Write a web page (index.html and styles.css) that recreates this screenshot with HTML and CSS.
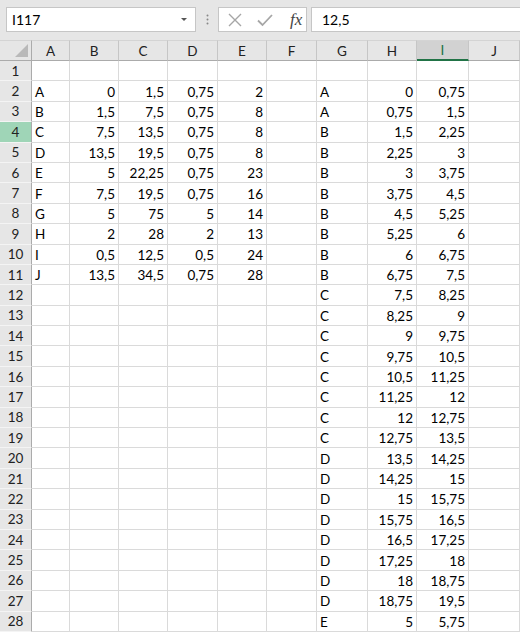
FILE: index.html
```html
<!DOCTYPE html>
<html lang="en">

<head>
    <meta charset="UTF-8">
    <meta name="viewport" content="width=device-width, initial-scale=1.0">
    <title>Sheet</title>

    <link rel="stylesheet" href="styles.css">
</head>

<body>

    <div class="toolbar">
        <div class="name-box">
            <span>I117</span>
            <span class="arrow"></span>
        </div>
        <div class="grip">
            <svg width="3" height="11" viewBox="0 0 3 11"><circle cx="1.5" cy="1.5" r="1" fill="#888"/><circle cx="1.5" cy="5.5" r="1" fill="#888"/><circle cx="1.5" cy="9.5" r="1" fill="#888"/></svg>
        </div>
        <div class="fx-buttons">
            <svg width="14" height="14" viewBox="0 0 14 14"><path d="M1 1 L13 13 M13 1 L1 13" stroke="#a6a6a6" stroke-width="1.4" fill="none"/></svg>
            <svg width="16" height="14" viewBox="0 0 16 14"><path d="M1 7.5 L5.5 12 L15 2" stroke="#a6a6a6" stroke-width="1.8" fill="none"/></svg>
            <span class="fx">fx</span>
        </div>
        <div class="formula">12,5</div>
    </div>

    <div class="sheet" id="sheet"></div>

    <script>
        const cols = ['A', 'B', 'C', 'D', 'E', 'F', 'G', 'H', 'I', 'J'];

        // A..E then G..I, one row per line, starting at row 2
        const data = [
            ['A', '0', '1,5', '0,75', '2', 'A', '0', '0,75'],
            ['B', '1,5', '7,5', '0,75', '8', 'A', '0,75', '1,5'],
            ['C', '7,5', '13,5', '0,75', '8', 'B', '1,5', '2,25'],
            ['D', '13,5', '19,5', '0,75', '8', 'B', '2,25', '3'],
            ['E', '5', '22,25', '0,75', '23', 'B', '3', '3,75'],
            ['F', '7,5', '19,5', '0,75', '16', 'B', '3,75', '4,5'],
            ['G', '5', '75', '5', '14', 'B', '4,5', '5,25'],
            ['H', '2', '28', '2', '13', 'B', '5,25', '6'],
            ['I', '0,5', '12,5', '0,5', '24', 'B', '6', '6,75'],
            ['J', '13,5', '34,5', '0,75', '28', 'B', '6,75', '7,5'],
            ['', '', '', '', '', 'C', '7,5', '8,25'],
            ['', '', '', '', '', 'C', '8,25', '9'],
            ['', '', '', '', '', 'C', '9', '9,75'],
            ['', '', '', '', '', 'C', '9,75', '10,5'],
            ['', '', '', '', '', 'C', '10,5', '11,25'],
            ['', '', '', '', '', 'C', '11,25', '12'],
            ['', '', '', '', '', 'C', '12', '12,75'],
            ['', '', '', '', '', 'C', '12,75', '13,5'],
            ['', '', '', '', '', 'D', '13,5', '14,25'],
            ['', '', '', '', '', 'D', '14,25', '15'],
            ['', '', '', '', '', 'D', '15', '15,75'],
            ['', '', '', '', '', 'D', '15,75', '16,5'],
            ['', '', '', '', '', 'D', '16,5', '17,25'],
            ['', '', '', '', '', 'D', '17,25', '18'],
            ['', '', '', '', '', 'D', '18', '18,75'],
            ['', '', '', '', '', 'D', '18,75', '19,5'],
            ['', '', '', '', '', 'E', '5', '5,75'],
        ];

        const sheet = document.getElementById('sheet');
        let html = '<div class="corner"></div>';

        cols.forEach(c => {
            html += `<div class="col-head${c === 'I' ? ' active' : ''}">${c}</div>`;
        });

        for (let r = 1; r <= 28; r++) {
            html += `<div class="row-head${r === 4 ? ' active' : ''}">${r}</div>`;
            const row = data[r - 2] || [];
            // spread into A..J, leaving F and J empty
            const vals = [row[0], row[1], row[2], row[3], row[4], '', row[5], row[6], row[7], ''];
            vals.forEach((v, i) => {
                const isText = i === 0 || i === 6;
                html += `<div class="cell ${isText ? 'txt' : 'num'}">${v || ''}</div>`;
            });
        }

        sheet.innerHTML = html;
    </script>

</body>

</html>
```

FILE: styles.css
```css
body {
    margin: 0;
    padding: 0;
    width: 520px;
    height: 632px;
    overflow: hidden;
    background-color: #fff;
    font-family: Lato, "Liberation Sans", sans-serif;
    font-size: 13.5px;
    color: #000;
}

.toolbar {
    display: flex;
    align-items: flex-start;
    height: 40px;
    padding: 7px 0 0 6px;
    box-sizing: border-box;
    background-color: #e6e6e6;
    overflow: hidden;
}

.name-box {
    display: flex;
    align-items: center;
    justify-content: space-between;
    width: 190px;
    height: 25px;
    padding: 0 8px 0 5px;
    box-sizing: border-box;
    background-color: #fff;
    border: 1px solid #c6c6c6;
    font-size: 14px;
}

.arrow {
    width: 0;
    height: 0;
    border-left: 3px solid transparent;
    border-right: 3px solid transparent;
    border-top: 3px solid #555;
}

.grip {
    display: flex;
    align-items: center;
    justify-content: center;
    width: 22px;
    height: 25px;
}

.fx-buttons {
    display: flex;
    align-items: center;
    width: 89px;
    height: 25px;
    padding: 0 0 0 9px;
    box-sizing: border-box;
    background-color: #fff;
    border: 1px solid #c6c6c6;
    gap: 15px;
}

.fx {
    font-family: "Liberation Serif", serif;
    font-style: italic;
    font-size: 17px;
    color: #444;
    margin-left: 2px;
}

.formula {
    flex: 1;
    height: 25px;
    margin-left: 4px;
    padding-left: 10px;
    line-height: 23px;
    box-sizing: border-box;
    background-color: #fff;
    border: 1px solid #c6c6c6;
    border-right: none;
    font-size: 14px;
}

.sheet {
    display: grid;
    grid-template-columns: 32px 38px 49px 49px 50px 49px 50px 51px 49px 52px 51px;
    grid-template-rows: 21px repeat(28, 20.4px);
}

.corner {
    position: relative;
    background-color: #e6e6e6;
    border-right: 1px solid #ababab;
    border-bottom: 1px solid #ababab;
    border-top: 1px solid #d4d4d4;
}

.corner::after {
    content: "";
    position: absolute;
    right: 3px;
    bottom: 3px;
    width: 0;
    height: 0;
    border-left: 13px solid transparent;
    border-bottom: 13px solid #b9b9b9;
}

.col-head {
    display: flex;
    align-items: center;
    justify-content: center;
    background-color: #e6e6e6;
    border-right: 1px solid #c6c6c6;
    border-bottom: 1px solid #ababab;
    border-top: 1px solid #d4d4d4;
    color: #222;
}

.col-head.active {
    background-color: #d2d2d2;
    border-bottom: 2px solid #217346;
    color: #217346;
}

.row-head {
    display: flex;
    align-items: center;
    justify-content: center;
    background-color: #e6e6e6;
    border-right: 1px solid #ababab;
    border-bottom: 1px solid #f4f4f4;
    color: #222;
    box-sizing: border-box;
}

.row-head.active {
    background-color: #9fd5b7;
}

.cell {
    display: flex;
    align-items: center;
    padding: 1px 3px 0 3px;
    border-right: 1px solid #dadada;
    border-bottom: 1px solid #dadada;
    white-space: nowrap;
    overflow: hidden;
    box-sizing: border-box;
}

.cell.num {
    justify-content: flex-end;
}

.cell.txt {
    justify-content: flex-start;
}
```
